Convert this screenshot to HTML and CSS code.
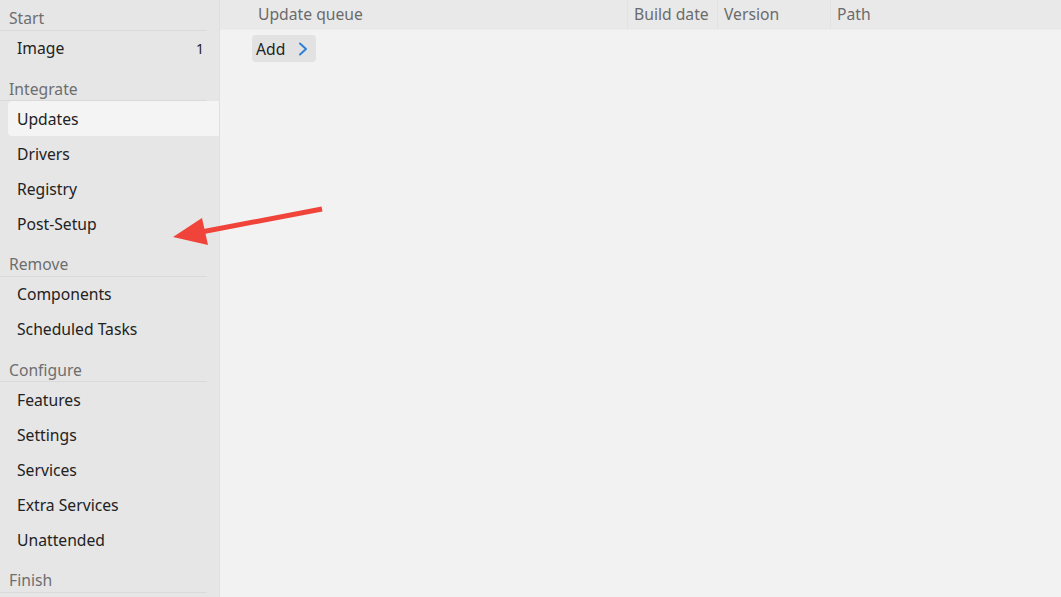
FILE: index.html
```html
<!DOCTYPE html>
<html>
<head>
<meta charset="utf-8">
<link rel="stylesheet" href="styles.css">
</head>
<body>
<div class="app">
  <nav class="sidebar">
    <div class="group first">Start</div>
    <div class="item"><span>Image</span><span class="badge">1</span></div>
    <div class="group">Integrate</div>
    <div class="item selected"><span>Updates</span></div>
    <div class="item"><span>Drivers</span></div>
    <div class="item"><span>Registry</span></div>
    <div class="item"><span>Post-Setup</span></div>
    <div class="group">Remove</div>
    <div class="item"><span>Components</span></div>
    <div class="item"><span>Scheduled Tasks</span></div>
    <div class="group">Configure</div>
    <div class="item"><span>Features</span></div>
    <div class="item"><span>Settings</span></div>
    <div class="item"><span>Services</span></div>
    <div class="item"><span>Extra Services</span></div>
    <div class="item"><span>Unattended</span></div>
    <div class="group">Finish</div>
  </nav>
  <main class="main">
    <div class="header">
      <div class="col c-queue">Update queue</div>
      <div class="col c-date">Build date</div>
      <div class="col c-ver">Version</div>
      <div class="col c-path">Path</div>
    </div>
    <div class="toolbar">
      <button class="add">Add <svg width="12" height="14" viewBox="0 0 12 14"><path d="M3 1.5 L9 7 L3 12.5" fill="none" stroke="#2f7fd6" stroke-width="2" stroke-linecap="round" stroke-linejoin="round"/></svg></button>
    </div>
  </main>
</div>
<svg class="arrow" width="1061" height="597" viewBox="0 0 1061 597">
  <line x1="322" y1="209" x2="196" y2="233" stroke="#f0433a" stroke-width="5" stroke-linecap="butt"/>
  <polygon points="173,237 202,218 208,245" fill="#f0433a"/>
</svg>
</body>
</html>
```
FILE: styles.css
```css
html, body {
  margin: 0;
  padding: 0;
  width: 1061px;
  height: 597px;
  overflow: hidden;
  font-family: "Noto Sans", "Open Sans", sans-serif;
  font-size: 15.7px;
}
.app {
  display: flex;
  height: 597px;
  background: #f2f2f2;
}
.sidebar {
  width: 220px;
  flex: none;
  background: #e6e6e6;
  border-right: 1px solid #e0e0e0;
  box-sizing: border-box;
  display: flex;
  flex-direction: column;
  overflow: hidden;
}
.group {
  flex: none;
  height: 35.5px;
  box-sizing: border-box;
  padding: 13px 0 0 9px;
  margin-right: 12px;
  line-height: 20px;
  color: #6e6e6e;
  border-bottom: 1px solid #dadada;
}
.group.first {
  margin-top: -5px;
}
.item {
  flex: none;
  height: 35px;
  display: flex;
  align-items: center;
  justify-content: space-between;
  padding: 0 15px 0 17px;
  color: #222;
  box-sizing: border-box;
}
.item.selected {
  background: #f4f4f4;
  margin-left: 8px;
  padding-left: 9px;
  border-radius: 4px 0 0 4px;
}
.badge {
  color: #222;
  font-size: 14px;
}
.main {
  flex: 1;
  display: flex;
  flex-direction: column;
}
.header {
  height: 30px;
  display: flex;
  background: #e9e9e9;
  border-bottom: 1px solid #ececec;
  box-sizing: border-box;
}
.col {
  color: #6b6b6b;
  line-height: 28px;
  padding-left: 6px;
  box-sizing: border-box;
  border-right: 1px solid #e2e2e2;
}
.c-queue { width: 408px; padding-left: 38px; }
.c-date { width: 90px; }
.c-ver { width: 113px; }
.c-path { flex: 1; border-right: none; }
.toolbar {
  padding: 5px 0 0 32px;
}
.add {
  display: inline-flex;
  align-items: center;
  gap: 12px;
  height: 27px;
  padding: 0 7px 0 4px;
  border: none;
  border-radius: 4px;
  background: #e2e2e2;
  font-family: inherit;
  font-size: 15.7px;
  color: #222;
}
.arrow {
  position: absolute;
  left: 0;
  top: 0;
  pointer-events: none;
}
```
